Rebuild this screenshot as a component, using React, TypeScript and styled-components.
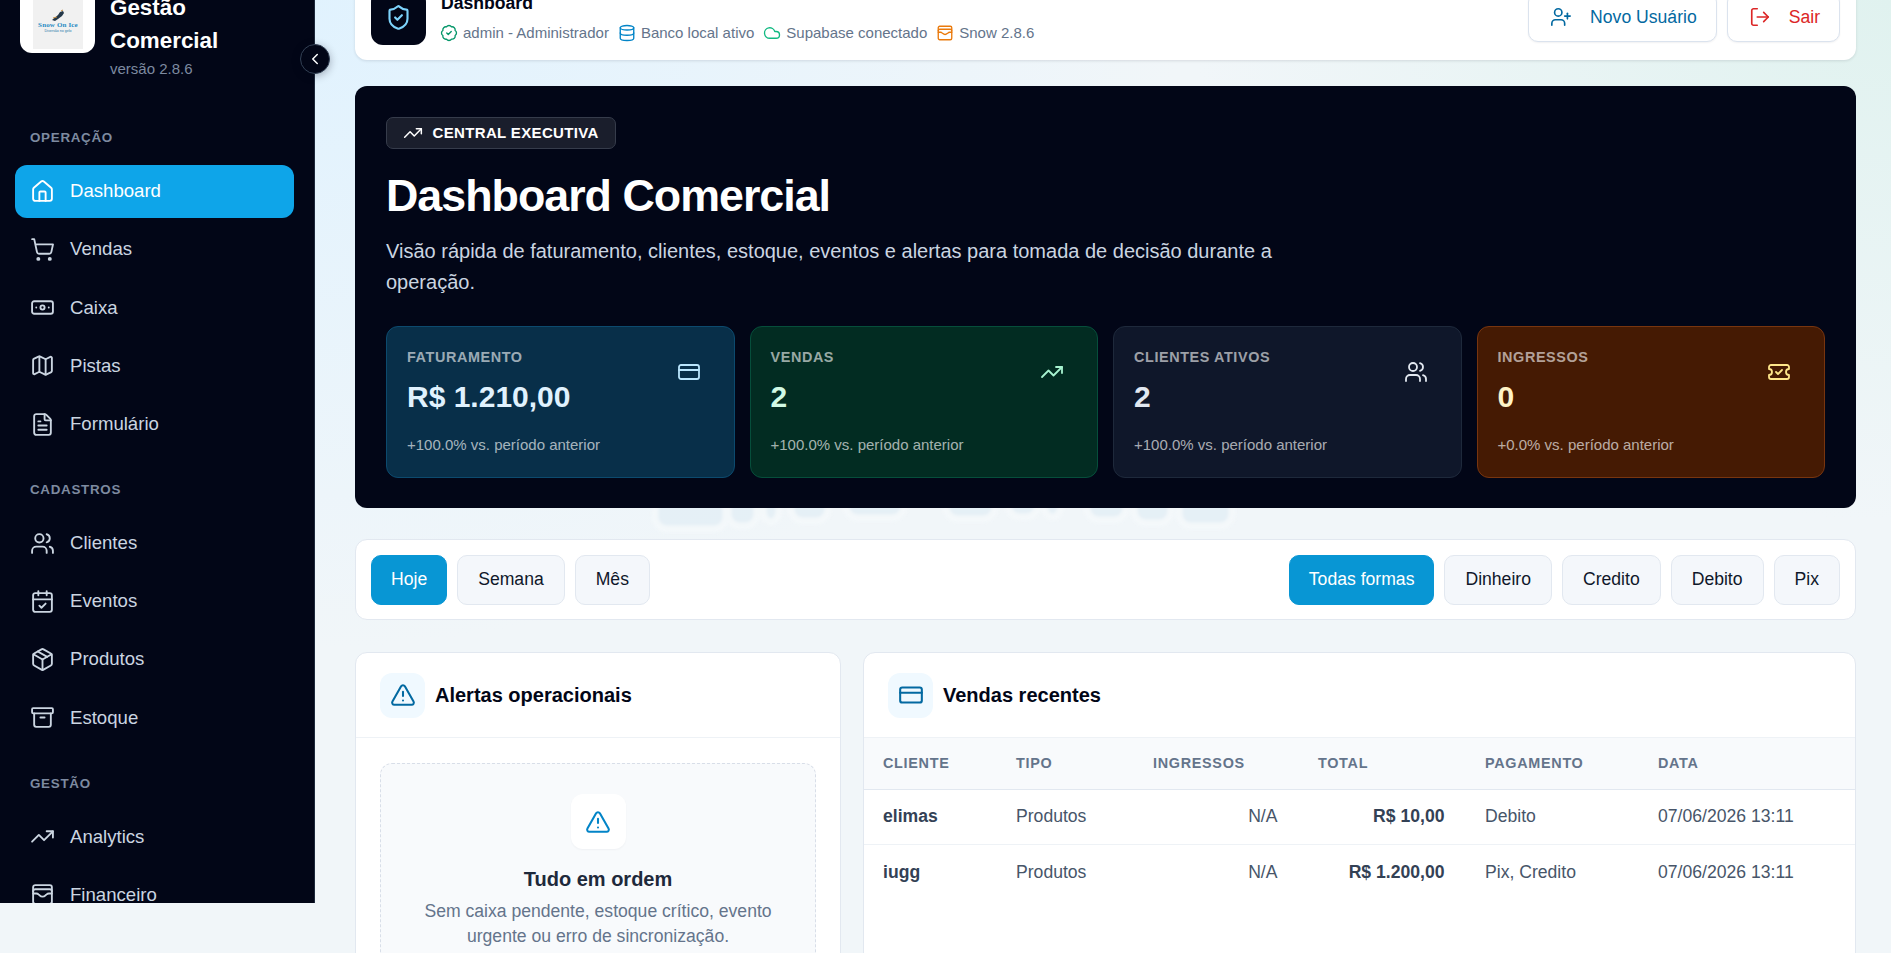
import React from "react";
import styled, { createGlobalStyle } from "styled-components";
import {
  Archive, AlertTriangle, Banknote, BadgeCheck, CalendarCheck, ChevronLeft, Cloud, CreditCard, Database, FileText,
  House, LogOut, Map as MapIcon, Package, ShieldCheck, ShoppingCart, TicketCheck, TrendingUp, UserPlus, Users, WalletCards,
} from "lucide-react";

const GlobalStyle = createGlobalStyle`
  html, body { margin: 0; height: 100%; overflow: hidden; }
  body { font-family: "Liberation Sans", Arial, sans-serif; background: #f1f6f9; }
  * { box-sizing: border-box; }
`;

const Shell = styled.div`
  display: flex;
  height: 953px;
  overflow: hidden;
  position: relative;
  background:
    radial-gradient(900px 650px at 15% 0%, #e0f2fe 0%, rgba(224, 242, 254, 0) 100%),
    radial-gradient(700px 520px at 100% 0%, #e0f2ef 0%, rgba(224, 242, 239, 0) 100%),
    #f1f6f9;
`;

const Sidebar = styled.aside`
  width: 315px;
  height: 903px;
  flex: none;
  background: #020617;
  border-right: 1px solid #1e293b;
  overflow: hidden;
  position: relative;
  padding: 0 15px;
`;

const Brand = styled.div`
  display: flex;
  gap: 15px;
  margin-top: -15px;
  padding-left: 5px;
`;

const LogoBox = styled.div`
  width: 75px;
  height: 68px;
  background: #fff;
  border-radius: 12px;
  display: flex;
  justify-content: center;
  flex: none;
`;

const LogoImg = styled.svg`
  width: 50px;
  height: 64px;
  background: #f1f1f1;
`;

const BrandText = styled.div`
  margin-top: 5.6px;
`;

const BrandName = styled.div`
  font-size: 22.4px;
  line-height: 33.6px;
  font-weight: 700;
  color: #fff;
  width: 130px;
`;

const Version = styled.div`
  font-size: 15px;
  line-height: 22px;
  color: #7d8aa0;
`;

const SectionLabel = styled.div<{ $first?: boolean }>`
  font-size: 13.4px;
  font-weight: 700;
  letter-spacing: 0.7px;
  color: #7d8aa0;
  line-height: 16px;
  padding-left: 15px;
  margin: ${(p) => (p.$first ? "50.5px" : "31.5px")} 0 18.5px;
`;

const NavList = styled.div`
  display: flex;
  flex-direction: column;
  gap: 5.2px;
`;

const NavItem = styled.div<{ $active?: boolean }>`
  height: 53px;
  display: flex;
  align-items: center;
  gap: 15.5px;
  padding-left: 14.5px;
  width: 279px;
  border-radius: 12px;
  font-size: 18.6px;
  color: ${(p) => (p.$active ? "#fff" : "#cbd5e1")};
  background: ${(p) => (p.$active ? "#0ea5e9" : "transparent")};
  svg { flex: none; }
`;

const CollapseButton = styled.button`
  position: absolute;
  left: 300px;
  top: 44px;
  width: 30px;
  height: 30px;
  border-radius: 50%;
  background: #020617;
  border: 1px solid #334155;
  color: #fff;
  padding: 0;
  display: flex;
  align-items: center;
  justify-content: center;
  box-shadow: 0 2px 8px rgba(2, 6, 23, 0.3);
`;

const Main = styled.main`
  flex: 1;
  min-width: 0;
  padding: 0 35px 0 40px;
  position: relative;
`;

const Watermark = styled.svg`
  position: absolute;
  left: 335px;
  top: 490px;
  width: 600px;
  height: 50px;
  filter: blur(1.5px);
  opacity: 0.75;
`;

const Topbar = styled.header`
  height: 90px;
  margin-top: -30px;
  background: #fff;
  border-radius: 12px;
  box-shadow: 0 1px 3px rgba(15, 23, 42, 0.12);
  padding: 0 16px;
  display: flex;
  align-items: flex-end;
  justify-content: space-between;
  position: relative;
`;

const TopLeft = styled.div`
  display: flex;
  gap: 15px;
  padding-bottom: 15px;
`;

const ShieldTile = styled.div`
  width: 55px;
  height: 55px;
  background: #020617;
  border-radius: 12px;
  display: flex;
  align-items: center;
  justify-content: center;
  color: #7dd3fc;
`;

const TopTitle = styled.div`
  margin-top: 2px;
  font-size: 17.6px;
  line-height: 22px;
  font-weight: 700;
  color: #020617;
`;

const MetaRow = styled.div`
  display: flex;
  gap: 9px;
  margin-top: 9px;
  margin-left: -1px;
`;

const Meta = styled.span<{ $tint: string }>`
  display: inline-flex;
  align-items: center;
  gap: 5px;
  font-size: 15px;
  line-height: 20px;
  color: #64748b;
  svg { color: ${(p) => p.$tint}; flex: none; }
`;

const TopActions = styled.div`
  display: flex;
  gap: 10px;
  padding-bottom: 18px;
`;

const ActionButton = styled.button<{ $tint: string }>`
  height: 50px;
  display: flex;
  align-items: center;
  gap: 18px;
  padding: 0 19px 0 21px;
  background: #fff;
  border: 1px solid #dbe3ee;
  border-radius: 10px;
  font: 400 17.6px "Liberation Sans", sans-serif;
  color: ${(p) => p.$tint};
  box-shadow: 0 1px 2px rgba(15, 23, 42, 0.06);
`;

const Hero = styled.section`
  margin-top: 26px;
  height: 422px;
  background: #020617;
  border-radius: 12px;
  padding: 31px 31px 0;
  position: relative;
`;

const HeroBadge = styled.div`
  display: inline-flex;
  align-items: center;
  height: 32px;
  padding: 0 16px 0 15.5px;
  gap: 10px;
  background: #1a1e2c;
  border: 1px solid #363c4b;
  border-radius: 7px;
  color: #fff;
  font-size: 15px;
  line-height: 30px;
  font-weight: 700;
  letter-spacing: 0.35px;
`;

const HeroTitle = styled.h1`
  margin: 18px 0 0;
  font-size: 44.8px;
  line-height: 56px;
  font-weight: 700;
  letter-spacing: -1px;
  color: #fff;
`;

const HeroText = styled.p`
  margin: 13px 0 0;
  max-width: 900px;
  font-size: 20px;
  line-height: 31px;
  color: #cbd5e1;
`;

const StatGrid = styled.div`
  display: grid;
  grid-template-columns: repeat(4, 1fr);
  gap: 15px;
  margin-top: 28px;
`;

const StatCard = styled.div<{ $bg: string; $line: string }>`
  height: 152px;
  background: ${(p) => p.$bg};
  border: 1px solid ${(p) => p.$line};
  border-radius: 12px;
  padding: 21px 20px 0;
  position: relative;
`;

const StatLabel = styled.div`
  font-size: 14.4px;
  line-height: 18px;
  font-weight: 700;
  letter-spacing: 0.6px;
  color: rgba(255, 255, 255, 0.6);
`;

const StatValue = styled.div<{ $tint: string }>`
  margin-top: 13px;
  font-size: 30px;
  line-height: 36px;
  font-weight: 700;
  color: ${(p) => p.$tint};
`;

const StatFoot = styled.div`
  margin-top: 20px;
  font-size: 15px;
  line-height: 20px;
  color: rgba(255, 255, 255, 0.65);
`;

const StatIcon = styled.div<{ $tint: string }>`
  position: absolute;
  right: 33px;
  top: 33px;
  color: ${(p) => p.$tint};
  line-height: 0;
`;

const FilterBar = styled.div`
  margin-top: 31px;
  height: 81px;
  background: #fff;
  border: 1px solid #e2e8f0;
  border-radius: 12px;
  padding: 0 15px;
  display: flex;
  align-items: center;
  justify-content: space-between;
  position: relative;
`;

const FilterGroup = styled.div`
  display: flex;
  gap: 10px;
`;

const FilterButton = styled.button<{ $on?: boolean }>`
  height: 50px;
  padding: 0 ${(p) => (p.$on ? "19px" : "20px")};
  border-radius: 10px;
  border: 1px solid ${(p) => (p.$on ? "#0896d4" : "#e2e8f0")};
  background: ${(p) => (p.$on ? "#0896d4" : "#f4f7fb")};
  color: ${(p) => (p.$on ? "#fff" : "#0f172a")};
  font: 400 17.6px "Liberation Sans", sans-serif;
`;

const Panels = styled.div`
  display: grid;
  grid-template-columns: 486px 993px;
  gap: 22px;
  margin-top: 32px;
  position: relative;
`;

const Panel = styled.section`
  height: 400px;
  background: #fff;
  border: 1px solid #e2e8f0;
  border-radius: 12px;
  overflow: hidden;
`;

const PanelHead = styled.div`
  height: 85px;
  display: flex;
  align-items: center;
  gap: 10px;
  padding: 0 24px;
  border-bottom: 1px solid #eef2f6;
`;

const PanelIcon = styled.div`
  width: 45px;
  height: 45px;
  border-radius: 12px;
  background: #f0f9ff;
  color: #0369a1;
  display: flex;
  align-items: center;
  justify-content: center;
`;

const PanelTitle = styled.h2`
  margin: 0;
  font-size: 20px;
  font-weight: 700;
  color: #020617;
`;

const EmptyState = styled.div`
  margin: 25px 24px 0;
  height: 300px;
  border: 1px dashed #d8dee8;
  border-radius: 12px;
  background: #f8fafc;
  padding-top: 30px;
  text-align: center;
`;

const EmptyIcon = styled.div`
  width: 55px;
  height: 55px;
  margin: 0 auto;
  border-radius: 12px;
  background: #fff;
  color: #0284c7;
  display: flex;
  align-items: center;
  justify-content: center;
  box-shadow: 0 1px 2px rgba(15, 23, 42, 0.04);
`;

const EmptyTitle = styled.div`
  margin-top: 18px;
  font-size: 20px;
  line-height: 24px;
  font-weight: 700;
  color: #1e293b;
`;

const EmptyText = styled.div`
  margin: 8px auto 0;
  width: 350px;
  font-size: 17.6px;
  line-height: 25px;
  color: #64748b;
`;

const Table = styled.table`
  width: 100%;
  border-collapse: collapse;
  table-layout: fixed;
`;

const Th = styled.th<{ $w: number }>`
  width: ${(p) => p.$w}px;
  height: 51px;
  padding: 0 19px;
  background: #f8fafc;
  border-bottom: 1px solid #e2e8f0;
  text-align: left;
  font-size: 14.4px;
  font-weight: 700;
  letter-spacing: 0.7px;
  color: #64748b;
`;

const Td = styled.td<{ $right?: boolean; $strong?: boolean }>`
  height: 55.5px;
  padding: 0 ${(p) => (p.$right ? "21.5px" : "19px")} 0 19px;
  border-bottom: 1px solid #eef2f6;
  font-size: 17.6px;
  text-align: ${(p) => (p.$right ? "right" : "left")};
  font-weight: ${(p) => (p.$strong ? 700 : 400)};
  color: ${(p) => (p.$strong ? "#334155" : "#475569")};
  white-space: nowrap;
`;

const Row2Td = styled(Td)`
  border-bottom: none;
`;

const NAV: [string, [string, any, boolean?][]][] = [
  ["OPERAÇÃO", [["Dashboard", House, true], ["Vendas", ShoppingCart], ["Caixa", Banknote], ["Pistas", MapIcon], ["Formulário", FileText]]],
  ["CADASTROS", [["Clientes", Users], ["Eventos", CalendarCheck], ["Produtos", Package], ["Estoque", Archive]]],
  ["GESTÃO", [["Analytics", TrendingUp], ["Financeiro", WalletCards]]],
];

const STATS = [
  { l: "FATURAMENTO", v: "R$ 1.210,00", f: "+100.0% vs. período anterior", bg: "#082f49", line: "#0c4a6e", tint: "#e0f2fe", ic: "#bae6fd", I: CreditCard },
  { l: "VENDAS", v: "2", f: "+100.0% vs. período anterior", bg: "#022c22", line: "#064e3b", tint: "#d1fae5", ic: "#a7f3d0", I: TrendingUp },
  { l: "CLIENTES ATIVOS", v: "2", f: "+100.0% vs. período anterior", bg: "#0f172a", line: "#1e293b", tint: "#e2e8f0", ic: "#e2e8f0", I: Users },
  { l: "INGRESSOS", v: "0", f: "+0.0% vs. período anterior", bg: "#451a03", line: "#78350f", tint: "#fef3c7", ic: "#fde68a", I: TicketCheck },
];

const COLS: [string, number][] = [["CLIENTE", 133], ["TIPO", 137], ["INGRESSOS", 165], ["TOTAL", 167], ["PAGAMENTO", 173], ["DATA", 216]];

const ROWS = [
  ["elimas", "Produtos", "N/A", "R$ 10,00", "Debito", "07/06/2026 13:11"],
  ["iugg", "Produtos", "N/A", "R$ 1.200,00", "Pix, Credito", "07/06/2026 13:11"],
];

const GHOST: [number, number, number][] = [
  [5, 71, 39], [78, 29, 36], [113, 16, 32], [141, 37, 31], [196, 58, 28], [296, 49, 29], [358, 30, 27], [394, 17, 27], [437, 39, 30], [484, 37, 33], [529, 53, 36],
];

export default function App() {
  return (
    <Shell>
      <GlobalStyle />
      <Sidebar>
        <Brand>
          <LogoBox>
            <LogoImg viewBox="0 0 50 64">
              <path d="M19 35 l6 -5 l2 -3 l3 -1 l1 2 l-2 3 l-4 3 l-3 2z" fill="#24384a" />
              <path d="M20 33 l4 -1 M28 26 l2 -1" stroke="#c08a3e" strokeWidth="1" />
              <text x="25" y="41.5" textAnchor="middle" fontFamily="Liberation Serif" fontWeight="700" fontSize="7" letterSpacing="0.15" fill="#2a8cc4">Snow On Ice</text>
              <text x="25" y="47" textAnchor="middle" fontFamily="Liberation Sans" fontSize="3.6" fill="#2a7aa8">Diversão no gelo</text>
            </LogoImg>
          </LogoBox>
          <BrandText>
            <BrandName>Gestão Comercial</BrandName>
            <Version>versão 2.8.6</Version>
          </BrandText>
        </Brand>
        {NAV.map(([label, items], i) => (
          <div key={label}>
            <SectionLabel $first={i === 0}>{label}</SectionLabel>
            <NavList>
              {items.map(([name, Icon, active]) => (
                <NavItem key={name} $active={active}>
                  <Icon size={25} strokeWidth={1.8} />
                  {name}
                </NavItem>
              ))}
            </NavList>
          </div>
        ))}
      </Sidebar>
      <CollapseButton>
        <ChevronLeft size={18} strokeWidth={2} />
      </CollapseButton>
      <Main>
        <Watermark viewBox="0 0 600 50" aria-hidden="true">
          {GHOST.map(([x, w, b]) => (
            <rect key={x} x={x} y={b - 30} width={w} height={30} rx={12} fill="#e2eef5" stroke="#f5f9fb" strokeWidth={7} />
          ))}
        </Watermark>
        <Topbar>
          <TopLeft>
            <ShieldTile><ShieldCheck size={27} strokeWidth={1.9} /></ShieldTile>
            <div>
              <TopTitle>Dashboard</TopTitle>
              <MetaRow>
                <Meta $tint="#059669"><BadgeCheck size={18} strokeWidth={1.8} />admin - Administrador</Meta>
                <Meta $tint="#0284c7"><Database size={18} strokeWidth={1.8} />Banco local ativo</Meta>
                <Meta $tint="#10b981"><Cloud size={18} strokeWidth={1.8} />Supabase conectado</Meta>
                <Meta $tint="#ea7a0c"><WalletCards size={18} strokeWidth={1.8} />Snow 2.8.6</Meta>
              </MetaRow>
            </div>
          </TopLeft>
          <TopActions>
            <ActionButton $tint="#0369a1"><UserPlus size={22} strokeWidth={1.8} />Novo Usuário</ActionButton>
            <ActionButton $tint="#dc2626"><LogOut size={22} strokeWidth={1.8} />Sair</ActionButton>
          </TopActions>
        </Topbar>
        <Hero>
          <HeroBadge><TrendingUp size={20} strokeWidth={1.8} />CENTRAL EXECUTIVA</HeroBadge>
          <HeroTitle>Dashboard Comercial</HeroTitle>
          <HeroText>Visão rápida de faturamento, clientes, estoque, eventos e alertas para tomada de decisão durante a operação.</HeroText>
          <StatGrid>
            {STATS.map((s) => (
              <StatCard key={s.l} $bg={s.bg} $line={s.line}>
                <StatLabel>{s.l}</StatLabel>
                <StatValue $tint={s.tint}>{s.v}</StatValue>
                <StatFoot>{s.f}</StatFoot>
                <StatIcon $tint={s.ic}><s.I size={24} strokeWidth={1.8} /></StatIcon>
              </StatCard>
            ))}
          </StatGrid>
        </Hero>
        <FilterBar>
          <FilterGroup>
            <FilterButton $on>Hoje</FilterButton>
            <FilterButton>Semana</FilterButton>
            <FilterButton>Mês</FilterButton>
          </FilterGroup>
          <FilterGroup>
            <FilterButton $on>Todas formas</FilterButton>
            <FilterButton>Dinheiro</FilterButton>
            <FilterButton>Credito</FilterButton>
            <FilterButton>Debito</FilterButton>
            <FilterButton>Pix</FilterButton>
          </FilterGroup>
        </FilterBar>
        <Panels>
          <Panel>
            <PanelHead>
              <PanelIcon><AlertTriangle size={26} strokeWidth={1.9} /></PanelIcon>
              <PanelTitle>Alertas operacionais</PanelTitle>
            </PanelHead>
            <EmptyState>
              <EmptyIcon><AlertTriangle size={26} strokeWidth={1.9} /></EmptyIcon>
              <EmptyTitle>Tudo em ordem</EmptyTitle>
              <EmptyText>Sem caixa pendente, estoque crítico, evento urgente ou erro de sincronização.</EmptyText>
            </EmptyState>
          </Panel>
          <Panel>
            <PanelHead>
              <PanelIcon><CreditCard size={26} strokeWidth={1.9} /></PanelIcon>
              <PanelTitle>Vendas recentes</PanelTitle>
            </PanelHead>
            <Table>
              <thead>
                <tr>{COLS.map(([c, w]) => <Th key={c} $w={w}>{c}</Th>)}</tr>
              </thead>
              <tbody>
                {ROWS.map((r, i) => {
                  const Cell = i === 0 ? Td : Row2Td;
                  return (
                    <tr key={r[0]}>
                      <Cell $strong>{r[0]}</Cell>
                      <Cell>{r[1]}</Cell>
                      <Cell $right>{r[2]}</Cell>
                      <Cell $right $strong>{r[3]}</Cell>
                      <Cell>{r[4]}</Cell>
                      <Cell>{r[5]}</Cell>
                    </tr>
                  );
                })}
              </tbody>
            </Table>
          </Panel>
        </Panels>
      </Main>
    </Shell>
  );
}
